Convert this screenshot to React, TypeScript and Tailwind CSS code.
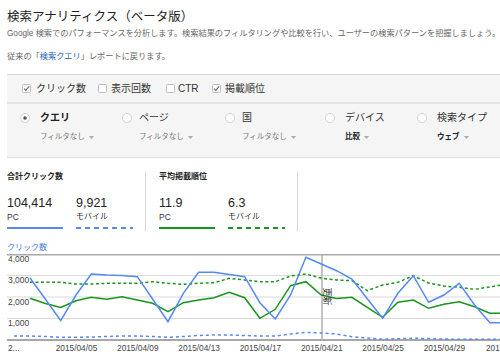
import React from "react";

const X0 = 30;
const DX = 15.33;
const TOP = 254;

const blueSolid = [278, 299, 320.7, 295, 274, 275, 275.5, 276.7, 299, 321.7, 293.3, 272.3, 272.3, 274.5, 276.7, 302.7, 319, 295, 257.3, 264, 270.7, 279, 298.7, 318.3, 293.3, 275.7, 302.3, 295, 283.3, 305, 322.7, 322.7];
const greenSolid = [298.3, 303.5, 307.5, 300.7, 297.3, 299.3, 296.7, 300, 303.3, 311.7, 302.7, 300, 297.7, 292.3, 297.7, 318.3, 309.3, 285.7, 281.7, 295, 298.5, 297.3, 307.3, 317.3, 302.3, 300, 308.3, 304.3, 301.7, 306.7, 313.3, 313.3];
const greenDashed = [282.3, 282.3, 282.3, 284, 284, 283.3, 283.3, 283.3, 281.7, 283.3, 284.3, 283.3, 282.7, 278.3, 280, 281.7, 281.7, 276, 274, 278.3, 280, 280.7, 290.7, 285, 282.3, 275.7, 283, 286, 287.3, 289.3, 287, 284.3];
const blueDashed = [336, 336.5, 337.3, 337.3, 337, 336.5, 336, 336, 336.5, 337.3, 336.5, 335.5, 335, 335, 335.5, 336, 336, 334, 332.3, 333, 334, 336.7, 338, 339.3, 338.7, 338.3, 338.5, 339, 339.3, 339.3, 339.3, 339.3];

const pts = (arr: number[], prefix = "") =>
  prefix + arr.map((y, i) => `${(X0 + DX * i).toFixed(1)},${(y - TOP).toFixed(1)}`).join(" ");

const BLUE = "#5589f3";
const GREEN = "#18961b";

function Check({ checked }: { checked: boolean }) {
  return (
    <svg width="9" height="9" viewBox="0 0 9 9" className="shrink-0">
      <rect x="0.5" y="0.5" width="8" height="8" rx="1" fill="#fff" stroke="#bdbdbd" />
      {checked && <path d="M2 4.6 L3.8 6.4 L7.2 2.4" fill="none" stroke="#666" strokeWidth="1.1" />}
    </svg>
  );
}

function Radio({ selected }: { selected: boolean }) {
  return (
    <svg width="10" height="10" viewBox="0 0 10 10" className="shrink-0 mt-[1px]">
      <circle cx="5" cy="5" r="4.5" fill="#fff" stroke="#cfcfcf" />
      {selected && <circle cx="5" cy="5" r="1.8" fill="#555" />}
    </svg>
  );
}

function Caret() {
  return (
    <svg width="5" height="3" viewBox="0 0 5 3" className="inline-block ml-[4px] align-middle">
      <path d="M0 0 L5 0 L2.5 3 Z" fill="#aaa" />
    </svg>
  );
}

function DashLine({ color, dashed, width }: { color: string; dashed: boolean; width: number }) {
  return (
    <svg width={width} height="2" className="block mt-[4px]">
      <line x1="0" y1="1" x2={width} y2="1" stroke={color} strokeWidth="2" strokeDasharray={dashed ? "5 4" : undefined} />
    </svg>
  );
}

export default function App() {
  const xLabels = [3, 7, 11, 15, 19, 23, 27];
  const labelText = ["2015/04/05", "2015/04/09", "2015/04/13", "2015/04/17", "2015/04/21", "2015/04/25", "2015/04/29"];
  return (
    <div className="w-[500px] h-[359px] overflow-hidden bg-white font-['Liberation_Sans','Noto_Sans_CJK_JP',sans-serif] text-[#333]">
      <div className="pl-[7px] pt-[8px]">
        <h1 className="text-[12.5px] leading-[18px] text-[#222] whitespace-nowrap">検索アナリティクス（ベータ版）</h1>
        <p className="mt-[2px] text-[8.2px] leading-[12px] text-[#666] whitespace-nowrap">
          Google 検索でのパフォーマンスを分析します。検索結果のフィルタリングや比較を行い、ユーザーの検索パターンを把握しましょう。
        </p>
        <p className="mt-[11px] text-[8.2px] leading-[12px] text-[#666] whitespace-nowrap">
          従来の「<span className="text-[#1f5fc8]">検索クエリ</span>」レポートに戻ります。
        </p>
      </div>

      <div className="mt-[11px] ml-[7px] bg-[#f5f5f5] border-t border-[#d9d9d9]">
        <div className="h-[29px] flex items-center pl-[15px] border-b-2 border-[#e6e6e6] text-[10px] text-[#333]">
          <div className="w-[76px] flex items-center gap-[5px]"><Check checked /><span>クリック数</span></div>
          <div className="w-[68px] flex items-center gap-[4px]"><Check checked={false} /><span>表示回数</span></div>
          <div className="w-[46px] flex items-center gap-[3px]"><Check checked={false} /><span>CTR</span></div>
          <div className="flex items-center gap-[4px]"><Check checked /><span>掲載順位</span></div>
        </div>
        <div className="h-[54px] flex pl-[13px] pt-[8px] border-b border-[#e2e2e2]">
          <div className="w-[102px] flex">
            <Radio selected />
            <div className="ml-[10px]">
              <div className="text-[10px] leading-[12px] font-bold text-[#222]">クエリ</div>
              <div className="mt-[7px] text-[7.5px] leading-[12px] text-[#777] whitespace-nowrap">フィルタなし<Caret /></div>
            </div>
          </div>
          <div className="w-[103px] flex">
            <Radio selected={false} />
            <div className="ml-[7px]">
              <div className="text-[10px] leading-[12px] text-[#333]">ページ</div>
              <div className="mt-[7px] text-[7.5px] leading-[12px] text-[#777] whitespace-nowrap">フィルタなし<Caret /></div>
            </div>
          </div>
          <div className="w-[100px] flex">
            <Radio selected={false} />
            <div className="ml-[7px]">
              <div className="text-[10px] leading-[12px] text-[#333]">国</div>
              <div className="mt-[7px] text-[7.5px] leading-[12px] text-[#777] whitespace-nowrap">フィルタなし<Caret /></div>
            </div>
          </div>
          <div className="w-[92px] flex">
            <Radio selected={false} />
            <div className="ml-[10px]">
              <div className="text-[10px] leading-[12px] text-[#333]">デバイス</div>
              <div className="mt-[7px] text-[7.5px] leading-[12px] font-bold text-[#222] whitespace-nowrap">比較<Caret /></div>
            </div>
          </div>
          <div className="flex">
            <Radio selected={false} />
            <div className="ml-[10px]">
              <div className="text-[10px] leading-[12px] text-[#333]">検索タイプ</div>
              <div className="mt-[7px] text-[7.5px] leading-[12px] font-bold text-[#222] whitespace-nowrap">ウェブ<Caret /></div>
            </div>
          </div>
        </div>
      </div>

      <div className="flex mt-[13px]">
        <div className="pl-[7px]">
          <div className="text-[8px] font-bold leading-[12px] text-[#222]">合計クリック数</div>
          <div className="flex gap-[13px] mt-[12px]">
            <div className="w-[56px]">
              <div className="text-[12.5px] leading-[16px] text-[#222]">104,414</div>
              <div className="text-[8.5px] leading-[12px] text-[#333]">PC</div>
              <DashLine color={BLUE} dashed={false} width={56} />
            </div>
            <div className="w-[57px]">
              <div className="text-[12.5px] leading-[16px] text-[#222]">9,921</div>
              <div className="text-[8px] leading-[12px] text-[#333]">モバイル</div>
              <DashLine color={BLUE} dashed width={57} />
            </div>
          </div>
        </div>
        <div className="ml-[12px] mt-[1px] h-[59px] w-px bg-[#d5d5d5]" />
        <div className="ml-[13px]">
          <div className="text-[8px] font-bold leading-[12px] text-[#222]">平均掲載順位</div>
          <div className="flex gap-[13px] mt-[12px]">
            <div className="w-[56px]">
              <div className="text-[12.5px] leading-[16px] text-[#222]">11.9</div>
              <div className="text-[8.5px] leading-[12px] text-[#333]">PC</div>
              <DashLine color={GREEN} dashed={false} width={56} />
            </div>
            <div className="w-[57px]">
              <div className="text-[12.5px] leading-[16px] text-[#222]">6.3</div>
              <div className="text-[8px] leading-[12px] text-[#333]">モバイル</div>
              <DashLine color={GREEN} dashed width={57} />
            </div>
          </div>
        </div>
        <div className="ml-[12px] mt-[1px] h-[59px] w-px bg-[#d5d5d5]" />
      </div>

      <div className="mt-[11px] pl-[7px] text-[8px] leading-[12px] text-[#4a7be8]">クリック数</div>

      <svg width="500" height="105" className="block" style={{ overflow: "hidden" }}>
        <line x1="7" y1="21.5" x2="500" y2="21.5" stroke="#d9d9d9" strokeWidth="1" />
        <line x1="7" y1="43" x2="500" y2="43" stroke="#d9d9d9" strokeWidth="1" />
        <line x1="7" y1="64.5" x2="500" y2="64.5" stroke="#d9d9d9" strokeWidth="1" />
        <line x1="7" y1="0.75" x2="500" y2="0.75" stroke="#aaa" strokeWidth="1.5" />
        <line x1="7" y1="86" x2="500" y2="86" stroke="#8a8a8a" strokeWidth="1.5" />
        <g fontSize="8.5" fill="#444" fontFamily="'Liberation Sans', sans-serif">
          <text x="8" y="7.5">4,000</text>
          <text x="8" y="29">3,000</text>
          <text x="8" y="50.5">2,000</text>
          <text x="8" y="72">1,000</text>
        </g>
        <line x1="322" y1="0" x2="322" y2="86" stroke="#b0b0b0" strokeWidth="1.5" />
        <polyline points={pts(greenDashed)} fill="none" stroke={GREEN} strokeWidth="1.5" strokeDasharray="3 2.5" />
        <polyline points={pts(greenSolid)} fill="none" stroke={GREEN} strokeWidth="1.5" />
        <polyline points={pts(blueDashed, "14,82 ")} fill="none" stroke={BLUE} strokeWidth="1.5" strokeDasharray="3 3" />
        <polyline points={pts(blueSolid)} fill="none" stroke={BLUE} strokeWidth="1.5" />
        <text
          transform="translate(327.5,42.5) rotate(90)"
          textAnchor="middle"
          dominantBaseline="central"
          fontSize="9"
          fill="#333"
          fontFamily="'Noto Sans CJK JP', sans-serif"
        >
          更新
        </text>
        <g fontSize="8.3" fill="#444" fontFamily="'Liberation Sans', sans-serif">
          <text x="8" y="96.5">2...</text>
          {xLabels.map((i, k) => (
            <text key={k} x={X0 + DX * i + 0.5} y="96.5" textAnchor="middle">
              {labelText[k]}
            </text>
          ))}
          <text x="486" y="96.5">201</text>
        </g>
      </svg>
    </div>
  );
}
